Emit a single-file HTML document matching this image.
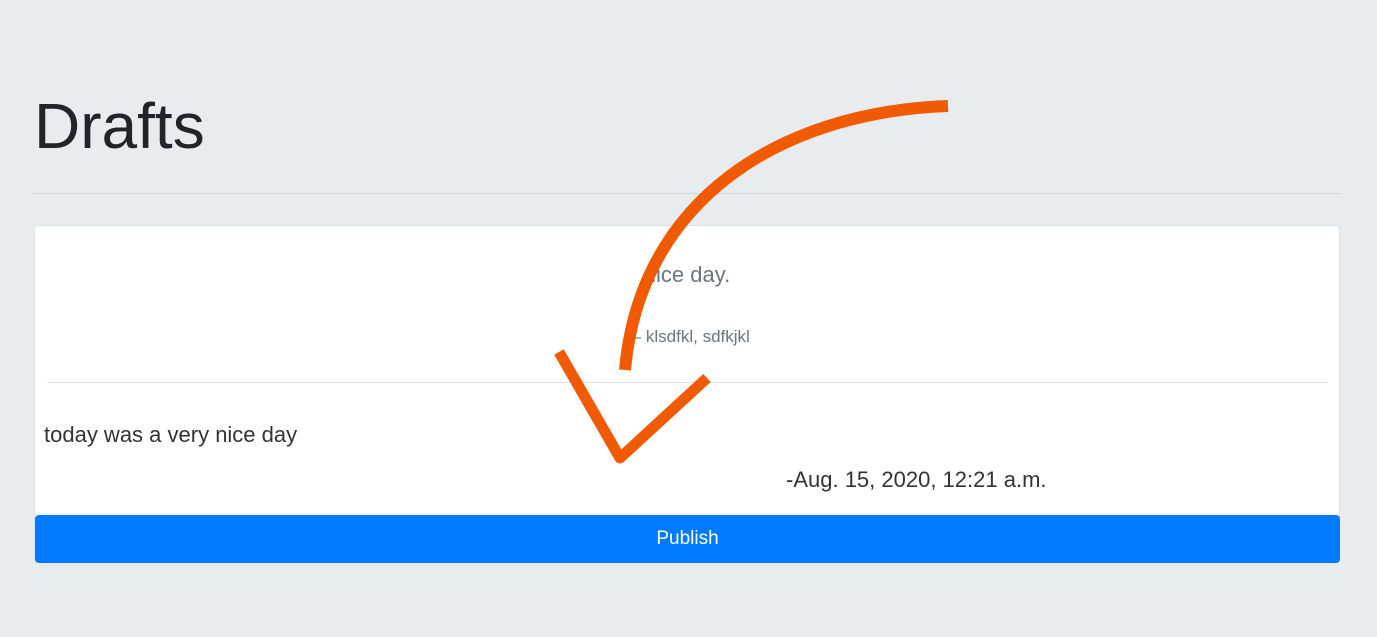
<!DOCTYPE html>
<html><head><style>
body{margin:0;background:#e9ecef;font-family:"Liberation Sans",sans-serif;width:1377px;height:637px;position:relative;overflow:hidden;color:#212529}
h1{position:absolute;left:34px;top:88px;margin:0;font-size:64px;font-weight:300;line-height:76px;color:#212529}
.rule{position:absolute;left:33px;top:193px;width:1308px;height:1px;background:#d3d5d8}
.card{position:absolute;left:34px;top:225px;width:1306px;height:338px;background:#fff;border:1px solid #dfe2e5;border-radius:4px;box-sizing:border-box}
.q{position:absolute;left:0;width:100%;text-align:center;color:#6c757d}
.hr{position:absolute;left:12px;top:156px;width:1281px;height:1px;background:#e5e5e5}
.btn{position:absolute;left:35px;top:515px;width:1305px;height:48px;background:#007bff;border-radius:4px;color:#fff;text-align:center;line-height:48px;font-size:19px}
</style></head><body>
<h1>Drafts</h1>
<div class="rule"></div>
<div class="card">
<div class="q" style="top:36px;font-size:22px">nice day.</div>
<div class="q" style="top:101px;font-size:17px">—&nbsp;klsdfkl, sdfkjkl</div>
<div class="hr"></div>
<div style="position:absolute;left:9px;top:196px;font-size:22px;color:#333">today was a very nice day</div>
<div style="position:absolute;left:751px;top:241px;font-size:22px;color:#333">-Aug. 15, 2020, 12:21 a.m.</div>
</div>
<div class="btn">Publish</div>
<svg style="position:absolute;left:0;top:0" width="1377" height="637">
<path d="M948 106 C780 112 640 200 625 370" fill="none" stroke="#f05a00" stroke-width="12" stroke-linecap="butt"/>
<path d="M559 352 L620 458 L707 378" fill="none" stroke="#f05a00" stroke-width="11" stroke-linejoin="round"/>
</svg>
</body></html>
